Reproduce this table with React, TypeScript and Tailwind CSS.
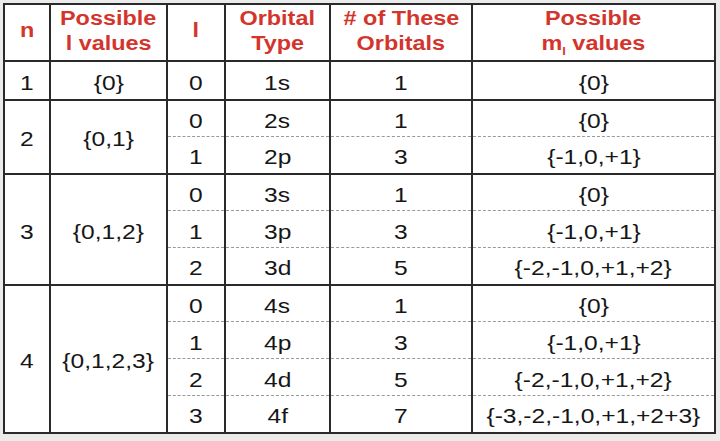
const groups = [
  { n: 1, ls: '{0}', rows: [['0', '1s', '1', '{0}']] },
  {
    n: 2,
    ls: '{0,1}',
    rows: [
      ['0', '2s', '1', '{0}'],
      ['1', '2p', '3', '{-1,0,+1}'],
    ],
  },
  {
    n: 3,
    ls: '{0,1,2}',
    rows: [
      ['0', '3s', '1', '{0}'],
      ['1', '3p', '3', '{-1,0,+1}'],
      ['2', '3d', '5', '{-2,-1,0,+1,+2}'],
    ],
  },
  {
    n: 4,
    ls: '{0,1,2,3}',
    rows: [
      ['0', '4s', '1', '{0}'],
      ['1', '4p', '3', '{-1,0,+1}'],
      ['2', '4d', '5', '{-2,-1,0,+1,+2}'],
      ['3', '4f', '7', '{-3,-2,-1,0,+1,+2+3}'],
    ],
  },
]

const th = 'border-2 border-[#2a2a2a] text-[#d3352c] font-bold text-[20px] leading-[25px] text-center align-middle pb-[4px]'
const wide = 'inline-block scale-x-[1.17]'

export default function App() {
  return (
    <div className="w-[720px] h-[441px] bg-[#ebebeb] pl-[3px] pt-[3px] font-['Liberation_Sans',Arial,sans-serif]">
      <table className="border-collapse bg-white text-[#161616] text-[21px] text-center table-fixed w-[711px]">
        <colgroup>
          <col className="w-[46px]" />
          <col className="w-[117px]" />
          <col className="w-[58px]" />
          <col className="w-[105px]" />
          <col className="w-[142px]" />
          <col className="w-[243px]" />
        </colgroup>
        <thead>
          <tr className="h-[57px]">
            <th className={th}>
              <span className={wide}>n</span>
            </th>
            <th className={th}>
              <span className={wide}>Possible</span>
              <br />
              <span className={wide}>l values</span>
            </th>
            <th className={th}>
              <span className={wide}>l</span>
            </th>
            <th className={th}>
              <span className={wide}>Orbital</span>
              <br />
              <span className={wide}>Type</span>
            </th>
            <th className={th}>
              <span className={wide}># of These</span>
              <br />
              <span className={wide}>Orbitals</span>
            </th>
            <th className={th}>
              <span className={wide}>Possible</span>
              <br />
              <span className={wide}>
                m<sub className="text-[11px] align-[-3px]">l</sub> values
              </span>
            </th>
          </tr>
        </thead>
        <tbody>
          {groups.map((g) =>
            g.rows.map((r, i) => {
              const first = i === 0
              const last = i === g.rows.length - 1
              const edge = `${first ? 'border-t-2 border-t-[#2a2a2a]' : 'border-t [border-top-style:dashed] border-t-[#9a9a9a]'} ${last ? 'border-b-2 border-b-[#2a2a2a]' : ''}`
              return (
                <tr key={`${g.n}-${i}`} className="h-[37px]">
                  {first && (
                    <>
                      <td rowSpan={g.rows.length} className="border-2 border-[#2a2a2a] align-middle pt-[5px]">
                        <span className={wide}>{g.n}</span>
                      </td>
                      <td rowSpan={g.rows.length} className="border-2 border-[#2a2a2a] align-middle pt-[5px]">
                        <span className={wide}>{g.ls}</span>
                      </td>
                    </>
                  )}
                  {r.map((c, j) => (
                    <td key={j} className={`border-x-2 border-x-[#2a2a2a] ${edge} align-middle leading-[24px] pt-[5px]`}>
                      <span className={wide}>{c}</span>
                    </td>
                  ))}
                </tr>
              )
            })
          )}
        </tbody>
      </table>
    </div>
  )
}
